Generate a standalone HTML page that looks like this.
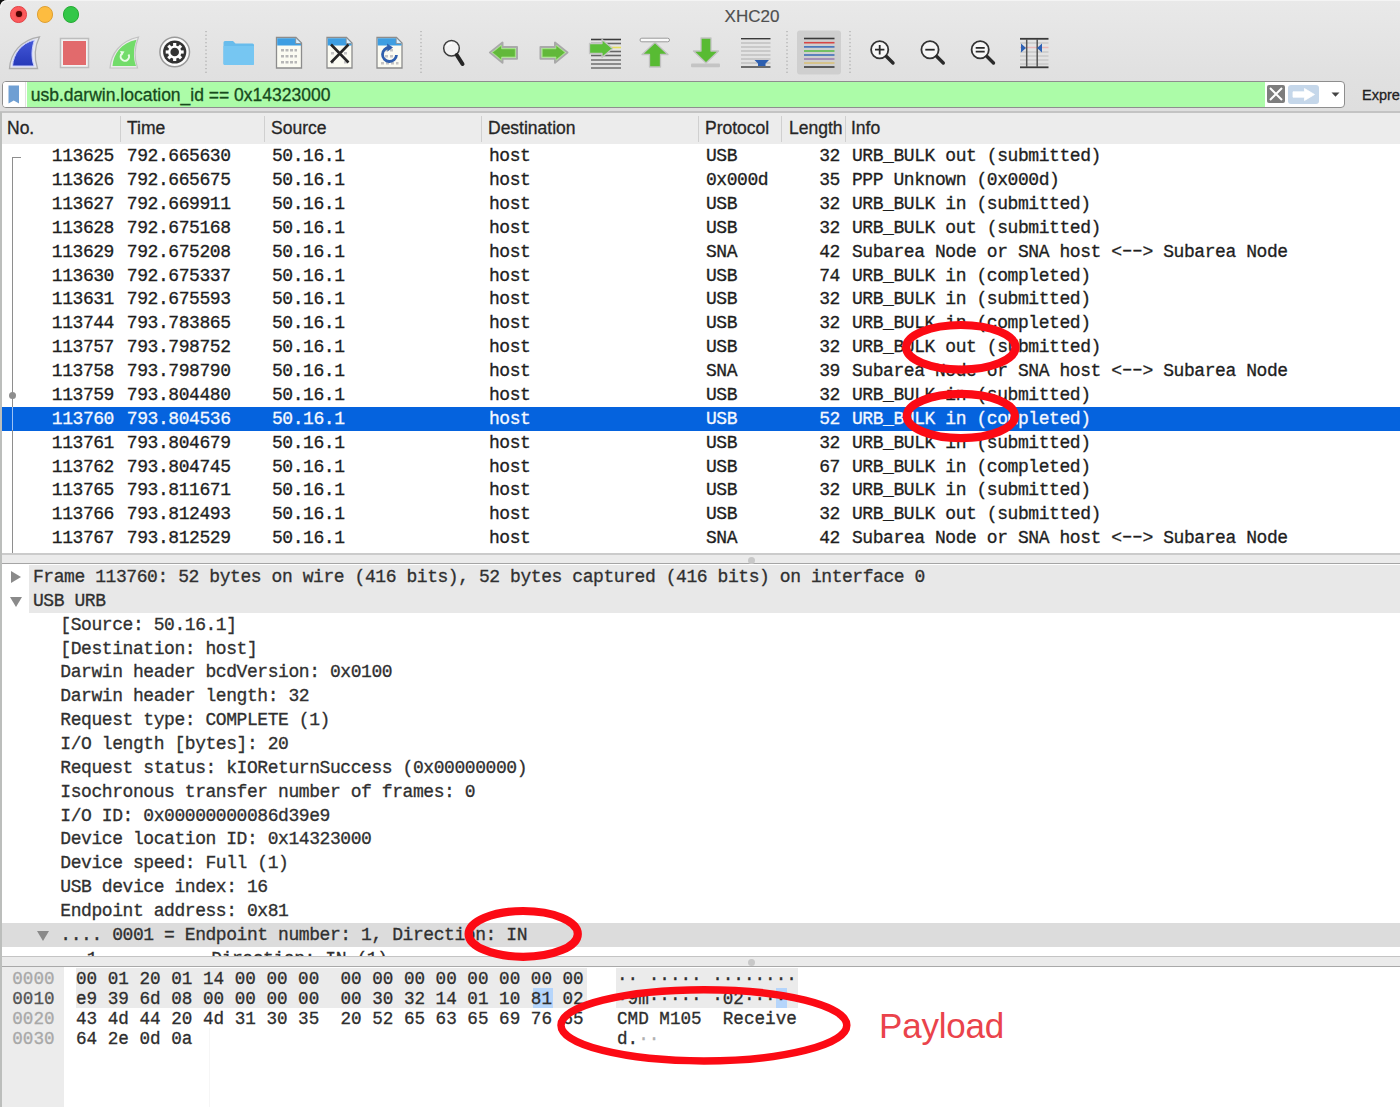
<!DOCTYPE html>
<html><head><meta charset="utf-8">
<style>
*{margin:0;padding:0;box-sizing:border-box}
html,body{width:1400px;height:1107px;overflow:hidden;background:#fff}
body{position:relative;font-family:"Liberation Sans",sans-serif}
.abs{position:absolute}
#top{left:0;top:0;width:1400px;height:111px;background:linear-gradient(#e9e9e9,#e1e1e1 70px,#dedede)}
#title{left:0;top:6.5px;width:1400px;padding-left:104px;text-align:center;font-size:17px;color:#4f4f4f;line-height:20px;-webkit-text-stroke:0.2px currentColor}
.light{width:16.4px;height:16.4px;border-radius:50%;top:6.3px}
.mono{font-family:"Liberation Mono",monospace;font-size:18px;letter-spacing:-0.43px;white-space:pre;-webkit-text-stroke:0.3px currentColor}
#filter{left:1.5px;top:80.5px;width:1343.5px;height:27px;border:1.7px solid #8e8e8e;border-radius:4px;background:#fff;overflow:hidden}
#hdr{left:0;top:110.5px;width:1400px;height:33.5px;background:#ececec;border-top:2px solid #c3c3c3;border-left:1px solid #c4c4c4}
.hc{top:-1px;height:32px;line-height:32px;font-size:17.5px;color:#262626;-webkit-text-stroke:0.3px currentColor}
.hs{top:3px;width:1px;height:26px;background:#d0d0d0}
#list{left:0;top:144px;width:1400px;height:409px;background:#fff;border-left:1px solid #c4c4c4}
.row{position:absolute;left:1px;width:1399px;height:23.875px;color:#1e1e1e}
.row span{position:absolute;top:0.2px;line-height:22px;transform:translateY(0.5px) scaleY(1.06);transform-origin:0 15.8px}
.sel{background:#0563de;color:#f4f8ff}
#split1{left:0;top:552.5px;width:1400px;height:11.5px;background:#ebebeb;border-top:2px solid #cbcbcb;border-bottom:1.5px solid #a5a5a5}
#det{left:0;top:564px;width:1400px;height:393px;background:#fff;border-left:1px solid #c4c4c4;overflow:hidden}
.drow{position:absolute;left:0;width:1400px;height:23.85px;color:#303030}
.drow span{position:absolute;top:1px;line-height:22px;transform:translateY(0.3px) scaleY(1.06);transform-origin:0 15.8px}
#split2{left:0;top:956px;width:1400px;height:11px;background:#ebebeb;border-top:1px solid #c4c4c4;border-bottom:1px solid #a9a9a9}
#hex{left:0;top:967px;width:1400px;height:140px;background:#fff;border-left:1px solid #c4c4c4}
.hx{font-family:"Liberation Mono",monospace;font-size:17.64px;letter-spacing:-0.0px;white-space:pre;-webkit-text-stroke:0.3px currentColor;position:absolute;line-height:20px;color:#2e2e2e;transform:translateY(0.8px) scaleY(1.06);transform-origin:0 14.7px}
</style></head><body>

<div id="top" class="abs"></div>
<div id="title" class="abs">XHC20</div>
<div class="abs" style="left:0;top:0;width:1400px;height:1px;background:#f4f4f4"></div><svg class="abs" style="left:0;top:0" width="12" height="12"><path d="M0 0H8Q0 0 0 8Z" fill="#111"/><path d="M8 0.6Q0.6 0.6 0.6 8" fill="none" stroke="#f6f6f6" stroke-width="1.2"/></svg>
<div class="abs light" style="left:10.4px;background:#fc5a5c;border:1px solid #e24448"><div class="abs" style="left:4.2px;top:4.2px;width:6px;height:6px;border-radius:50%;background:#4d0503;box-shadow:0 0 1.5px #8a0a08"></div></div>
<div class="abs light" style="left:37px;background:#fdbc40;border:1px solid #dea034"></div>
<div class="abs light" style="left:63px;background:#33c748;border:1px solid #27aa35"></div>

<!-- toolbar icons -->
<svg class="abs" style="left:0;top:28px" width="1100" height="50" viewBox="0 28 1100 50">
<defs>
<linearGradient id="gfin" x1="0" y1="0" x2="0" y2="1"><stop offset="0" stop-color="#4458d8"/><stop offset="1" stop-color="#2538b8"/></linearGradient>
</defs>
<!-- 1 shark fin -->
<path d="M9.5 68.5C10.5 54 20 40 39.5 36.8C35 46 34 58 37.5 68.5Z" fill="#e4e6ee" stroke="#adadad" stroke-width="1.3"/>
<path d="M12.5 66C13.5 54 21 43 34.5 40C31.5 48 31 58 34 66Z" fill="url(#gfin)" stroke="#c6ccff" stroke-width="1"/>
<!-- 2 stop -->
<rect x="60.5" y="38.5" width="28" height="29" fill="#f2f2f2" stroke="#bdbdbd" stroke-width="1.5"/>
<rect x="63" y="41" width="23" height="24" fill="#e26a6c"/>
<!-- 3 green fin -->
<path d="M110 68C111 54 120 41 138.5 37C134.5 47 134 58 137.5 68Z" fill="#ececec" stroke="#c2c2c2" stroke-width="1.2"/>
<path d="M112.5 66C113.5 54 121 43 136.5 39.8C133.5 48 133 58 136 66Z" fill="#72dc6a"/>
<path d="M128.5 54.5A4.2 4.2 0 1 1 122 53.5" fill="none" stroke="#e8fbe6" stroke-width="2"/>
<path d="M120 51L124.5 51.5L122 55.5Z" fill="#e8fbe6"/>
<!-- 4 gear -->
<circle cx="174.7" cy="52" r="14.8" fill="#fbfbfb" stroke="#9a9a9a" stroke-width="1.5"/>
<circle cx="174.7" cy="52" r="11.6" fill="#333"/>
<g fill="#fff" transform="translate(174.7 52)">
<circle r="6.6"/>
<rect x="-1.6" y="-9" width="3.2" height="18"/>
<rect x="-1.6" y="-9" width="3.2" height="18" transform="rotate(45)"/>
<rect x="-1.6" y="-9" width="3.2" height="18" transform="rotate(90)"/>
<rect x="-1.6" y="-9" width="3.2" height="18" transform="rotate(135)"/>
</g>
<circle cx="174.7" cy="52" r="4.3" fill="#333"/>
<!-- sep -->
<line x1="206" y1="31" x2="206" y2="74" stroke="#9c9c9c" stroke-width="1" stroke-dasharray="1.2 2.5"/>
<!-- 5 folder -->
<path d="M223.5 42.5Q223.5 41 225 41H233L235.5 43.5H252.5Q254 43.5 254 45V63.5Q254 65 252.5 65H225Q223.5 65 223.5 63.5Z" fill="#68bcec"/>
<path d="M223.5 46H254V63.5Q254 65 252.5 65H225Q223.5 65 223.5 63.5Z" fill="#76c6f2"/>
<!-- 6 doc grid -->
<path d="M276.5 37.5H296L301.5 43V68H276.5Z" fill="#fbfbf2" stroke="#8c8c8c" stroke-width="1.3"/>
<path d="M277.2 38.2H295.7L301 43.5V45.5H277.2Z" fill="#3d9ee2"/>
<path d="M295.7 38.2V43.5H301" fill="#dff0fb" stroke="#8c8c8c" stroke-width="0.8"/>
<g fill="#b7b7b7">
<rect x="281" y="49" width="3" height="2.5"/><rect x="285.5" y="49" width="3" height="2.5"/><rect x="290" y="49" width="3" height="2.5"/><rect x="294.5" y="49" width="2.5" height="2.5"/>
<rect x="281" y="55" width="3" height="2.5"/><rect x="285.5" y="55" width="3" height="2.5"/><rect x="290" y="55" width="3" height="2.5"/><rect x="294.5" y="55" width="2.5" height="2.5"/>
<rect x="281" y="61" width="3" height="2.5"/><rect x="285.5" y="61" width="3" height="2.5"/><rect x="290" y="61" width="3" height="2.5"/><rect x="294.5" y="61" width="2.5" height="2.5"/>
</g>
<!-- 7 doc X -->
<path d="M327 37.5H346.5L352 43V68H327Z" fill="#fbfbf2" stroke="#8c8c8c" stroke-width="1.3"/>
<path d="M327.7 38.2H346.2L351.5 43.5V45.5H327.7Z" fill="#3d9ee2"/>
<path d="M346.2 38.2V43.5H351.5" fill="#dff0fb" stroke="#8c8c8c" stroke-width="0.8"/>
<g fill="#c4c4c4"><rect x="331" y="52" width="3" height="2.5"/><rect x="344" y="52" width="3" height="2.5"/><rect x="331" y="61" width="3" height="2.5"/><rect x="344" y="61" width="3" height="2.5"/></g>
<path d="M331 44.5L348.5 62.5M348.5 44.5L331 62.5" stroke="#262626" stroke-width="2.6"/>
<!-- 8 doc reload -->
<path d="M377 37.5H396.5L402 43V68H377Z" fill="#fbfbf2" stroke="#8c8c8c" stroke-width="1.3"/>
<path d="M377.7 38.2H396.2L401.5 43.5V45.5H377.7Z" fill="#3d9ee2"/>
<path d="M396.2 38.2V43.5H401.5" fill="#dff0fb" stroke="#8c8c8c" stroke-width="0.8"/>
<g fill="#c4c4c4"><rect x="385" y="49" width="3" height="2.5"/><rect x="390" y="49" width="3" height="2.5"/><rect x="385" y="55" width="3" height="2.5"/><rect x="390" y="55" width="3" height="2.5"/><rect x="381" y="62" width="3" height="2.5"/><rect x="386" y="62" width="3" height="2.5"/><rect x="391" y="62" width="3" height="2.5"/><rect x="396" y="62" width="2.5" height="2.5"/></g>
<path d="M396.5 55A7 7 0 1 1 389.5 47.5" fill="none" stroke="#2e5fae" stroke-width="2.8"/>
<path d="M387 43.5L393 47.5L387.5 51.5Z" fill="#2e5fae"/>
<!-- sep -->
<line x1="421" y1="31" x2="421" y2="74" stroke="#9c9c9c" stroke-width="1" stroke-dasharray="1.2 2.5"/>
<!-- 9 magnifier -->
<circle cx="451.5" cy="48.2" r="7.8" fill="#f2f2f2" stroke="#3c3c3c" stroke-width="1.5"/>
<path d="M447 46A5 5 0 0 1 452 43" fill="none" stroke="#fff" stroke-width="1.3"/>
<path d="M456.8 55L462.5 64" stroke="#262626" stroke-width="4" stroke-linecap="round"/>
<!-- 10 left arrow -->
<path d="M490 52.5L502.5 42.5V47H517V58.7H502.5V62.7Z" fill="#c8f2b8" stroke="#a9a9a9" stroke-width="2" stroke-linejoin="round"/>
<path d="M492.3 52.5L501.5 45.3V48.8H515.3V57H501.5V60Z" fill="#62b83a" stroke="#9ee07f" stroke-width="0.8" stroke-linejoin="round"/>
<!-- 11 right arrow -->
<path d="M567.5 52.5L555 42.5V47H540.5V58.7H555V62.7Z" fill="#c8f2b8" stroke="#a9a9a9" stroke-width="2" stroke-linejoin="round"/>
<path d="M565.2 52.5L556 45.3V48.8H542.2V57H556V60Z" fill="#62b83a" stroke="#9ee07f" stroke-width="0.8" stroke-linejoin="round"/>
<!-- 12 go to packet -->
<g stroke-width="1.6">
<line x1="591" y1="39.5" x2="621" y2="39.5" stroke="#3c3c3c"/>
<line x1="591" y1="43.5" x2="621" y2="43.5" stroke="#666"/>
<line x1="591" y1="47.5" x2="621" y2="47.5" stroke="#e6df5c"/>
<line x1="591" y1="51.5" x2="621" y2="51.5" stroke="#666"/>
<line x1="591" y1="55.5" x2="621" y2="55.5" stroke="#666"/>
<line x1="591" y1="60" x2="621" y2="60" stroke="#777"/>
<line x1="591" y1="64" x2="621" y2="64" stroke="#777"/>
<line x1="591" y1="68" x2="621" y2="68" stroke="#777"/>
</g>
<path d="M612.5 48.5L602 39.5V43.5H589.5V53.5H602V57.5Z" fill="#5cbf3a" stroke="#c5c5c5" stroke-width="1.3" stroke-linejoin="round"/>
<!-- 13 first packet (up) -->
<rect x="640" y="38.2" width="29.5" height="3.6" rx="1.8" fill="#fafafa" stroke="#9a9a9a" stroke-width="1"/>
<path d="M655 42.5L668 54.5H660.5V67H649.5V54.5H642Z" fill="#58bb33" stroke="#c2c2c2" stroke-width="1.3" stroke-linejoin="round"/>
<!-- 14 last packet (down) -->
<path d="M706 63L693.5 51H701V38H711V51H718.5Z" fill="#58bb33" stroke="#c2c2c2" stroke-width="1.3" stroke-linejoin="round"/>
<rect x="691" y="63.5" width="29" height="3.8" rx="1" fill="#c4c4c4"/>
<!-- 15 autoscroll -->
<g stroke-width="1.4">
<line x1="741" y1="38.7" x2="770.5" y2="38.7" stroke="#3a3a3a"/>
<line x1="741" y1="43" x2="770.5" y2="43" stroke="#bdbdbd"/>
<line x1="741" y1="47" x2="770.5" y2="47" stroke="#bdbdbd"/>
<line x1="741" y1="51" x2="770.5" y2="51" stroke="#bdbdbd"/>
<line x1="741" y1="55" x2="770.5" y2="55" stroke="#bdbdbd"/>
<line x1="741" y1="59" x2="770.5" y2="59" stroke="#bdbdbd"/>
<line x1="741" y1="63" x2="770.5" y2="63" stroke="#bdbdbd"/>
<line x1="741" y1="67" x2="770.5" y2="67" stroke="#3a3a3a"/>
</g>
<path d="M754.5 60H769L765.5 63.5V66H758V63.5Z" fill="#2d5fb0"/>
<!-- sep -->
<line x1="787" y1="31" x2="787" y2="74" stroke="#9c9c9c" stroke-width="1" stroke-dasharray="1.2 2.5"/>
<!-- 16 colorize (pressed) -->
<rect x="797" y="30.5" width="44" height="44" rx="3" fill="#cfcfcf"/>
<g stroke-width="1.6">
<line x1="804" y1="38.5" x2="834.5" y2="38.5" stroke="#3a3a3a"/>
<line x1="804" y1="42.7" x2="834.5" y2="42.7" stroke="#d64545"/>
<line x1="804" y1="46.9" x2="834.5" y2="46.9" stroke="#3f6fb8"/>
<line x1="804" y1="51" x2="834.5" y2="51" stroke="#5cbb4a"/>
<line x1="804" y1="55" x2="834.5" y2="55" stroke="#3f6fb8"/>
<line x1="804" y1="59" x2="834.5" y2="59" stroke="#9a7fb0"/>
<line x1="804" y1="63" x2="834.5" y2="63" stroke="#d8c07a"/>
<line x1="804" y1="67" x2="834.5" y2="67" stroke="#3a3a3a"/>
</g>
<line x1="850" y1="31" x2="850" y2="74" stroke="#9c9c9c" stroke-width="1" stroke-dasharray="1.2 2.5"/>
<!-- 17-19 zoom -->
<g fill="#f7f7f7" stroke="#333" stroke-width="1.8">
<circle cx="879.7" cy="49.7" r="8.6"/>
<circle cx="930" cy="49.7" r="8.6"/>
<circle cx="980.2" cy="49.7" r="8.6"/>
</g>
<g stroke="#2a2a2a" stroke-width="3.4" stroke-linecap="round">
<path d="M886.5 56.5L893 63"/><path d="M936.8 56.5L943.3 63"/><path d="M987 56.5L993.5 63"/>
</g>
<g stroke="#2a2a2a" stroke-width="1.8">
<path d="M875 49.7H884.4M879.7 45V54.4"/>
<path d="M925.3 49.7H934.7"/>
<path d="M975.7 47.8H984.7M975.7 51.6H984.7"/>
</g>
<!-- 20 resize columns -->
<g stroke-width="1.5">
<line x1="1020" y1="38.8" x2="1048.5" y2="38.8" stroke="#3a3a3a" stroke-width="1.8"/>
<line x1="1020" y1="43" x2="1048.5" y2="43" stroke="#c8c8c8"/>
<line x1="1020" y1="47.5" x2="1048.5" y2="47.5" stroke="#e8b8b8"/>
<line x1="1020" y1="52" x2="1048.5" y2="52" stroke="#c8c8c8"/>
<line x1="1020" y1="56" x2="1048.5" y2="56" stroke="#c8c8c8"/>
<line x1="1020" y1="60" x2="1048.5" y2="60" stroke="#c8c8c8"/>
<line x1="1020" y1="64" x2="1048.5" y2="64" stroke="#c8c8c8"/>
<line x1="1020" y1="67.3" x2="1048.5" y2="67.3" stroke="#3a3a3a" stroke-width="1.8"/>
<line x1="1026.7" y1="39" x2="1026.7" y2="67" stroke="#555"/>
<line x1="1037.2" y1="39" x2="1037.2" y2="67" stroke="#555"/>
</g>
<path d="M1021 43.5L1026 48L1021 52.5Z" fill="#2d62b5"/>
<path d="M1042 43.5L1037 48L1042 52.5Z" fill="#2d62b5"/>
</svg>


<!-- filter bar -->
<div id="filter" class="abs">
  <div class="abs" style="left:0;top:0;width:23px;height:25px;background:#fff;border-right:1px solid #e0e0e0"></div>
  <svg class="abs" style="left:5px;top:3px" width="12" height="19"><path d="M0.5 0.5H11V18.5L5.75 15.5L0.5 18.5Z" fill="#6f9fd3"/></svg>
  <div class="abs" style="left:24px;top:0;width:1238px;height:25px;background:#acfca8"></div>
  <div class="abs" style="left:28.3px;top:1.3px;line-height:25px;font-size:17.5px;color:#174a1c;-webkit-text-stroke:0.3px currentColor">usb.darwin.location_id == 0x14323000</div>
  <div class="abs" style="left:1264px;top:3px;width:18px;height:18px;background:#7d7d7d;border-radius:2px"></div>
  <svg class="abs" style="left:1264px;top:3px" width="18" height="18"><path d="M3 3L15 15M15 3L3 15" stroke="#fff" stroke-width="2"/></svg>
  <div class="abs" style="left:1285.5px;top:3px;width:31px;height:19px;background:#c5d7ea;border-radius:3px"></div>
  <svg class="abs" style="left:1285.5px;top:3px" width="31" height="19"><path d="M5 6.8H16.5V3.5L26.5 9.5L16.5 15.5V12.2H5Z" fill="#fff" stroke="#fff" stroke-width="0.8" stroke-linejoin="round"/></svg>
  <svg class="abs" style="left:1328px;top:10px" width="10" height="8"><path d="M0.5 0.5H8.5L4.5 4.8Z" fill="#444"/></svg>
</div>
<div class="abs" style="left:1362px;top:85px;font-size:14.5px;line-height:20px;color:#222;-webkit-text-stroke:0.3px currentColor">Expres</div>

<!-- column header -->
<div id="hdr" class="abs">
  <div class="abs hc" style="left:6px">No.</div>
  <div class="abs hs" style="left:119px"></div>
  <div class="abs hc" style="left:126px">Time</div>
  <div class="abs hs" style="left:263px"></div>
  <div class="abs hc" style="left:270px">Source</div>
  <div class="abs hs" style="left:480px"></div>
  <div class="abs hc" style="left:487px">Destination</div>
  <div class="abs hs" style="left:697px"></div>
  <div class="abs hc" style="left:704px">Protocol</div>
  <div class="abs hs" style="left:780px"></div>
  <div class="abs hc" style="left:788px">Length</div>
  <div class="abs hs" style="left:844px"></div>
  <div class="abs hc" style="left:850px">Info</div>
</div>

<!-- packet list -->
<div id="list" class="abs mono">
<div class="row" style="top:0.000px"><span style="right:1287px">113625</span><span style="left:124.8px">792.665630</span><span style="left:270px">50.16.1</span><span style="left:487px">host</span><span style="left:704px">USB</span><span style="right:561px">32</span><span style="left:850px">URB_BULK out (submitted)</span></div>
<div class="row" style="top:23.875px"><span style="right:1287px">113626</span><span style="left:124.8px">792.665675</span><span style="left:270px">50.16.1</span><span style="left:487px">host</span><span style="left:704px">0x000d</span><span style="right:561px">35</span><span style="left:850px">PPP Unknown (0x000d)</span></div>
<div class="row" style="top:47.750px"><span style="right:1287px">113627</span><span style="left:124.8px">792.669911</span><span style="left:270px">50.16.1</span><span style="left:487px">host</span><span style="left:704px">USB</span><span style="right:561px">32</span><span style="left:850px">URB_BULK in (submitted)</span></div>
<div class="row" style="top:71.625px"><span style="right:1287px">113628</span><span style="left:124.8px">792.675168</span><span style="left:270px">50.16.1</span><span style="left:487px">host</span><span style="left:704px">USB</span><span style="right:561px">32</span><span style="left:850px">URB_BULK out (submitted)</span></div>
<div class="row" style="top:95.500px"><span style="right:1287px">113629</span><span style="left:124.8px">792.675208</span><span style="left:270px">50.16.1</span><span style="left:487px">host</span><span style="left:704px">SNA</span><span style="right:561px">42</span><span style="left:850px">Subarea Node or SNA host &lt;<i style="font-style:normal;position:relative;top:-1.5px">––</i>&gt; Subarea Node</span></div>
<div class="row" style="top:119.375px"><span style="right:1287px">113630</span><span style="left:124.8px">792.675337</span><span style="left:270px">50.16.1</span><span style="left:487px">host</span><span style="left:704px">USB</span><span style="right:561px">74</span><span style="left:850px">URB_BULK in (completed)</span></div>
<div class="row" style="top:143.250px"><span style="right:1287px">113631</span><span style="left:124.8px">792.675593</span><span style="left:270px">50.16.1</span><span style="left:487px">host</span><span style="left:704px">USB</span><span style="right:561px">32</span><span style="left:850px">URB_BULK in (submitted)</span></div>
<div class="row" style="top:167.125px"><span style="right:1287px">113744</span><span style="left:124.8px">793.783865</span><span style="left:270px">50.16.1</span><span style="left:487px">host</span><span style="left:704px">USB</span><span style="right:561px">32</span><span style="left:850px">URB_BULK in (completed)</span></div>
<div class="row" style="top:191.000px"><span style="right:1287px">113757</span><span style="left:124.8px">793.798752</span><span style="left:270px">50.16.1</span><span style="left:487px">host</span><span style="left:704px">USB</span><span style="right:561px">32</span><span style="left:850px">URB_BULK out (submitted)</span></div>
<div class="row" style="top:214.875px"><span style="right:1287px">113758</span><span style="left:124.8px">793.798790</span><span style="left:270px">50.16.1</span><span style="left:487px">host</span><span style="left:704px">SNA</span><span style="right:561px">39</span><span style="left:850px">Subarea Node or SNA host &lt;<i style="font-style:normal;position:relative;top:-1.5px">––</i>&gt; Subarea Node</span></div>
<div class="row" style="top:238.750px"><span style="right:1287px">113759</span><span style="left:124.8px">793.804480</span><span style="left:270px">50.16.1</span><span style="left:487px">host</span><span style="left:704px">USB</span><span style="right:561px">32</span><span style="left:850px">URB_BULK in (submitted)</span></div>
<div class="row sel" style="top:262.625px"><span style="right:1287px">113760</span><span style="left:124.8px">793.804536</span><span style="left:270px">50.16.1</span><span style="left:487px">host</span><span style="left:704px">USB</span><span style="right:561px">52</span><span style="left:850px">URB_BULK in (completed)</span></div>
<div class="row" style="top:286.500px"><span style="right:1287px">113761</span><span style="left:124.8px">793.804679</span><span style="left:270px">50.16.1</span><span style="left:487px">host</span><span style="left:704px">USB</span><span style="right:561px">32</span><span style="left:850px">URB_BULK in (submitted)</span></div>
<div class="row" style="top:310.375px"><span style="right:1287px">113762</span><span style="left:124.8px">793.804745</span><span style="left:270px">50.16.1</span><span style="left:487px">host</span><span style="left:704px">USB</span><span style="right:561px">67</span><span style="left:850px">URB_BULK in (completed)</span></div>
<div class="row" style="top:334.250px"><span style="right:1287px">113765</span><span style="left:124.8px">793.811671</span><span style="left:270px">50.16.1</span><span style="left:487px">host</span><span style="left:704px">USB</span><span style="right:561px">32</span><span style="left:850px">URB_BULK in (submitted)</span></div>
<div class="row" style="top:358.125px"><span style="right:1287px">113766</span><span style="left:124.8px">793.812493</span><span style="left:270px">50.16.1</span><span style="left:487px">host</span><span style="left:704px">USB</span><span style="right:561px">32</span><span style="left:850px">URB_BULK out (submitted)</span></div>
<div class="row" style="top:382.000px"><span style="right:1287px">113767</span><span style="left:124.8px">793.812529</span><span style="left:270px">50.16.1</span><span style="left:487px">host</span><span style="left:704px">SNA</span><span style="right:561px">42</span><span style="left:850px">Subarea Node or SNA host &lt;<i style="font-style:normal;position:relative;top:-1.5px">––</i>&gt; Subarea Node</span></div>
<div class="abs" style="left:11px;top:13px;width:1px;height:396px;background:#8e8e8e"></div>
<div class="abs" style="left:11px;top:13px;width:9px;height:1px;background:#8e8e8e"></div>
<div class="abs" style="left:8px;top:248px;width:7px;height:7px;border-radius:50%;background:#8e8e8e"></div>
<div class="abs" style="left:11px;top:262.62px;width:1px;height:23.88px;background:#9cc2f5"></div>
</div>

<div id="split1" class="abs"><div class="abs" style="left:748px;top:2px;width:7px;height:7px;border-radius:50%;background:#c8c8c8"></div></div>

<!-- details -->
<div id="det" class="abs mono">
<div class="abs" style="left:28px;top:1.00px;width:1372px;height:23.85px;background:#e8e8e8"></div>
<svg class="abs" style="left:8.5px;top:7.00px" width="12" height="12"><path d="M1 0L11 6L1 12Z" fill="#8a8a8a"/></svg>
<div class="drow" style="top:1.00px"><span style="left:32px">Frame 113760: 52 bytes on wire (416 bits), 52 bytes captured (416 bits) on interface 0</span></div>
<div class="abs" style="left:28px;top:24.85px;width:1372px;height:23.85px;background:#e8e8e8"></div>
<svg class="abs" style="left:8.5px;top:31.85px" width="12" height="12"><path d="M0 1H12L6 11Z" fill="#8a8a8a"/></svg>
<div class="drow" style="top:24.85px"><span style="left:32px">USB URB</span></div>
<div class="drow" style="top:48.70px"><span style="left:59.3px">[Source: 50.16.1]</span></div>
<div class="drow" style="top:72.55px"><span style="left:59.3px">[Destination: host]</span></div>
<div class="drow" style="top:96.40px"><span style="left:59.3px">Darwin header bcdVersion: 0x0100</span></div>
<div class="drow" style="top:120.25px"><span style="left:59.3px">Darwin header length: 32</span></div>
<div class="drow" style="top:144.10px"><span style="left:59.3px">Request type: COMPLETE (1)</span></div>
<div class="drow" style="top:167.95px"><span style="left:59.3px">I/O length [bytes]: 20</span></div>
<div class="drow" style="top:191.80px"><span style="left:59.3px">Request status: kIOReturnSuccess (0x00000000)</span></div>
<div class="drow" style="top:215.65px"><span style="left:59.3px">Isochronous transfer number of frames: 0</span></div>
<div class="drow" style="top:239.50px"><span style="left:59.3px">I/O ID: 0x00000000086d39e9</span></div>
<div class="drow" style="top:263.35px"><span style="left:59.3px">Device location ID: 0x14323000</span></div>
<div class="drow" style="top:287.20px"><span style="left:59.3px">Device speed: Full (1)</span></div>
<div class="drow" style="top:311.05px"><span style="left:59.3px">USB device index: 16</span></div>
<div class="drow" style="top:334.90px"><span style="left:59.3px">Endpoint address: 0x81</span></div>
<div class="abs" style="left:1px;top:358.75px;width:1399px;height:23.85px;background:#dcdcdc"></div>
<svg class="abs" style="left:36px;top:365.75px" width="12" height="12"><path d="M0 1H12L6 11Z" fill="#8a8a8a"/></svg>
<div class="drow" style="top:358.75px"><span style="left:59.3px">.... 0001 = Endpoint number: 1, Direction: IN</span></div>
<div class="drow" style="top:382.60px"><span style="left:85.8px">1... ....   Direction: IN (1)</span></div>
</div>

<div id="split2" class="abs"><div class="abs" style="left:748px;top:2px;width:7px;height:7px;border-radius:50%;background:#c8c8c8"></div></div>

<!-- hex -->
<div id="hex" class="abs">
<div class="abs" style="left:1px;top:0;width:62px;height:140px;background:#ececec"></div>
<div class="abs" style="left:75px;top:1px;width:511px;height:40px;background:#ebebeb"></div>
<div class="abs" style="left:615px;top:1px;width:182px;height:40px;background:#ebebeb"></div>
<div class="abs" style="left:532px;top:21px;width:20px;height:20px;background:#b5d5fb"></div>
<div class="abs" style="left:775px;top:21px;width:11px;height:20px;background:#b5d5fb"></div>
<div class="abs" style="left:208px;top:61px;width:1px;height:79px;background:#f6f6f6"></div>
<div class="hx" style="left:11.3px;top:1px;color:#a8a8a8">0000</div>
<div class="hx" style="left:75px;top:1px">00 01 20 01 14 00 00 00  00 00 00 00 00 00 00 00</div>
<div class="hx" style="left:616px;top:1px">·· ····· ········</div>
<div class="hx" style="left:11.3px;top:21px;color:#555">0010</div>
<div class="hx" style="left:75px;top:21px">e9 39 6d 08 00 00 00 00  00 30 32 14 01 10 81 02</div>
<div class="hx" style="left:616px;top:21px">·9m····· ·02·····</div>
<div class="hx" style="left:11.3px;top:41px;color:#a8a8a8">0020</div>
<div class="hx" style="left:75px;top:41px">43 4d 44 20 4d 31 30 35  20 52 65 63 65 69 76 65</div>
<div class="hx" style="left:616px;top:41px">CMD M105  Receive</div>
<div class="hx" style="left:11.3px;top:61px;color:#a8a8a8">0030</div>
<div class="hx" style="left:75px;top:61px">64 2e 0d 0a</div>
<div class="hx" style="left:616px;top:61px">d.<span style="color:#b0b0b0">··</span></div>
</div>

<div class="abs" style="left:0;top:112px;width:1.6px;height:995px;background:#bcbebc"></div>
<!-- annotations -->
<svg class="abs" style="left:0;top:0" width="1400" height="1107">
<g fill="none" stroke="#fc0a14" stroke-width="8.2">
<ellipse cx="960.8" cy="347.3" rx="54.7" ry="22.3"/>
<ellipse cx="960.9" cy="416" rx="54.1" ry="22.1"/>
<ellipse cx="523.2" cy="933.9" rx="54.6" ry="22.9"/>
<ellipse cx="703.9" cy="1025.3" rx="142.9" ry="35.6" stroke-width="7.5"/>
</g>
</svg>
<div class="abs" style="left:879px;top:1006px;font-size:35px;line-height:40px;color:#ea434b;letter-spacing:-0.2px">Payload</div>
</body></html>
